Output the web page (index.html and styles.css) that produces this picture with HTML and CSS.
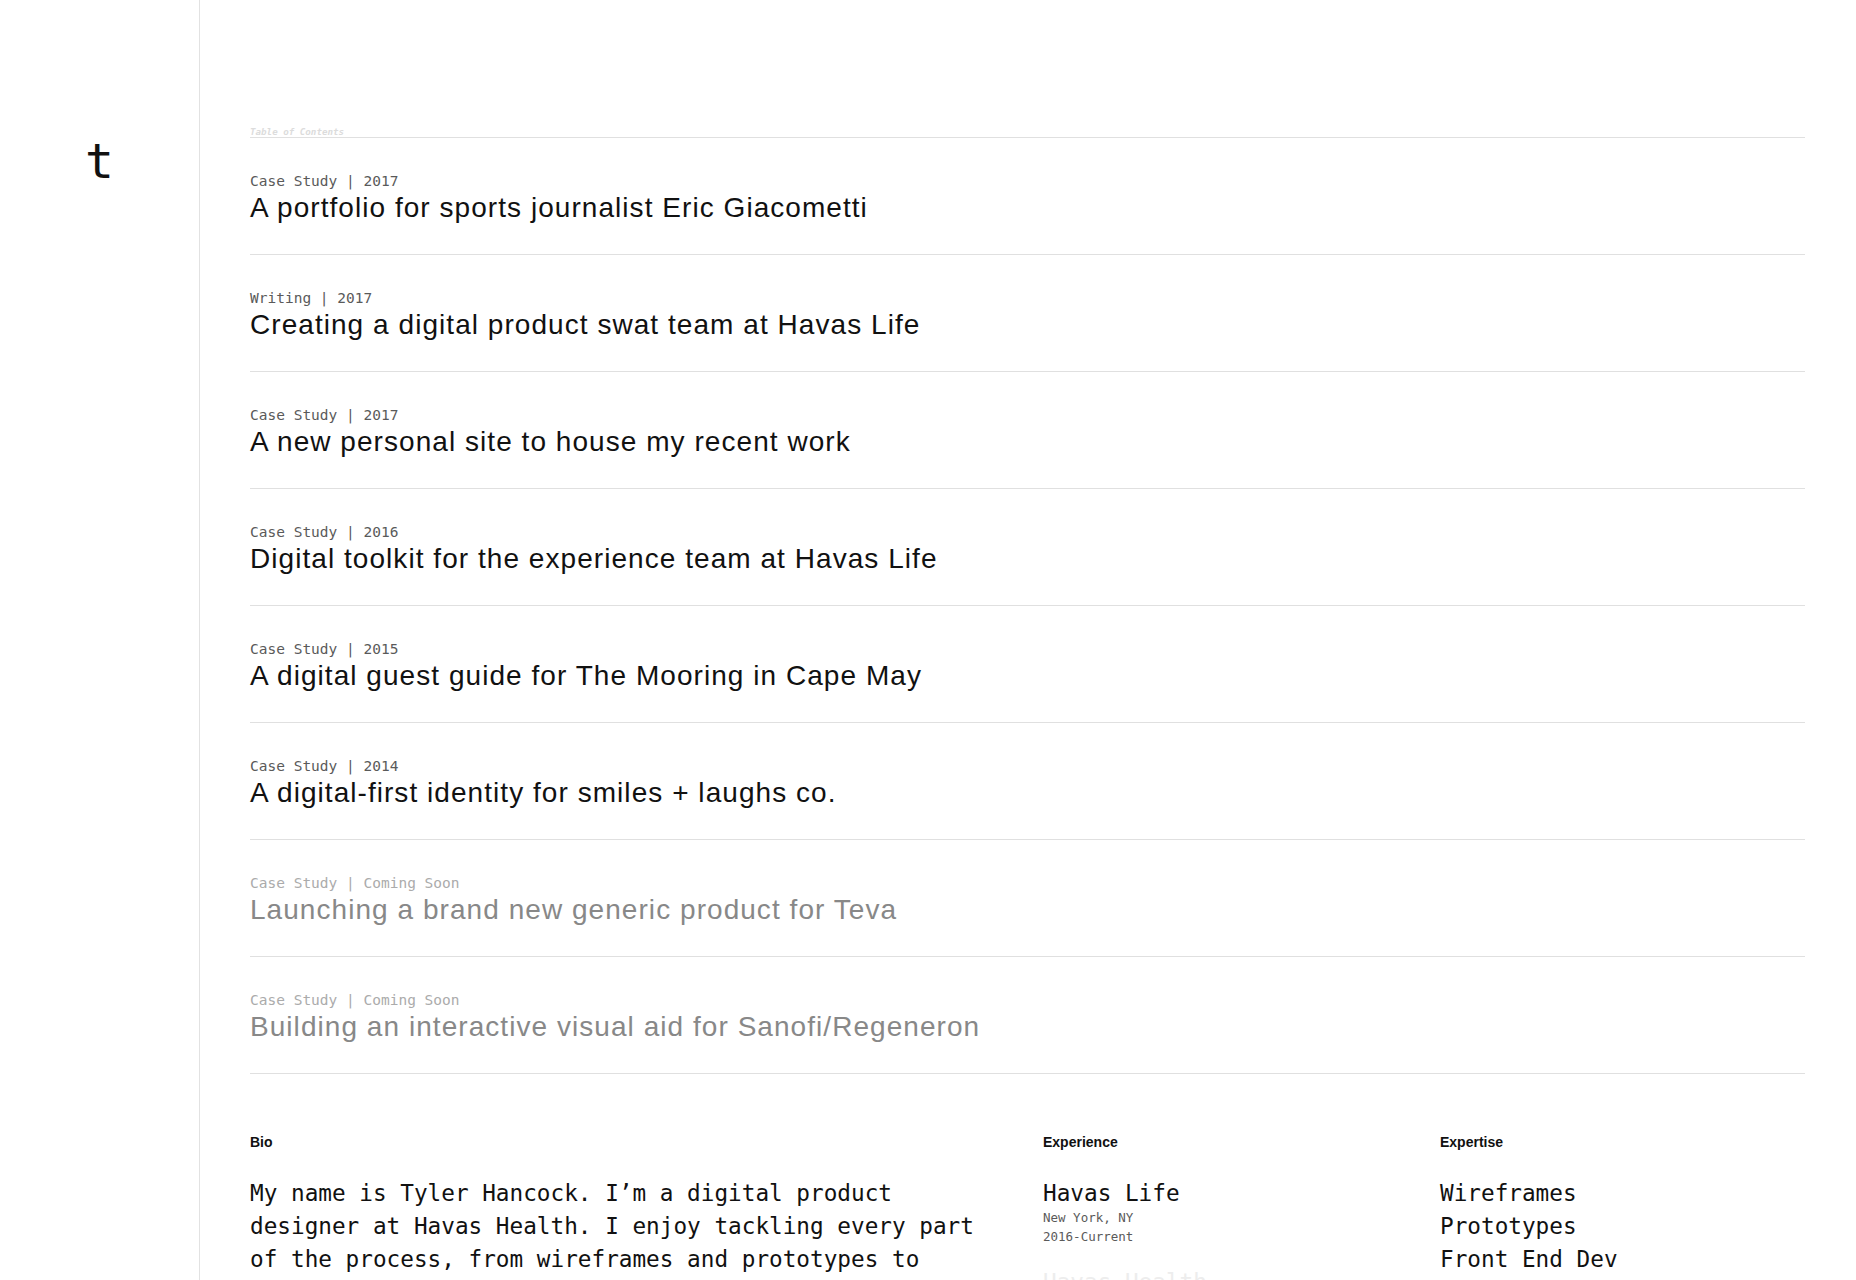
FILE: index.html
```html
<!DOCTYPE html>
<html lang="en">
<head>
    <meta charset="UTF-8">
    <meta name="viewport" content="width=device-width, initial-scale=1">
    <title>Tyler Hancock</title>
    <link rel="stylesheet" href="styles.css">
</head>
<body>

<aside class="sidebar">
    <a class="logo" href="#">t</a>
</aside>

<main>
    <h2 class="toc-label">Table of Contents</h2>
    <ul class="toc">
        <li class="entry">
            <span class="meta">Case Study | 2017</span>
            <a class="title" href="#">A portfolio for sports journalist Eric Giacometti</a>
        </li>
        <li class="entry">
            <span class="meta">Writing | 2017</span>
            <a class="title" href="#">Creating a digital product swat team at Havas Life</a>
        </li>
        <li class="entry">
            <span class="meta">Case Study | 2017</span>
            <a class="title" href="#">A new personal site to house my recent work</a>
        </li>
        <li class="entry">
            <span class="meta">Case Study | 2016</span>
            <a class="title" href="#">Digital toolkit for the experience team at Havas Life</a>
        </li>
        <li class="entry">
            <span class="meta">Case Study | 2015</span>
            <a class="title" href="#">A digital guest guide for The Mooring in Cape May</a>
        </li>
        <li class="entry">
            <span class="meta">Case Study | 2014</span>
            <a class="title" href="#">A digital-first identity for smiles + laughs co.</a>
        </li>
        <li class="entry soon">
            <span class="meta">Case Study | Coming Soon</span>
            <span class="title">Launching a brand new generic product for Teva</span>
        </li>
        <li class="entry soon">
            <span class="meta">Case Study | Coming Soon</span>
            <span class="title">Building an interactive visual aid for Sanofi/Regeneron</span>
        </li>
    </ul>

    <section class="about">
        <div class="bio">
            <h3>Bio</h3>
            <p>My name is Tyler Hancock. I’m a digital product designer at Havas Health. I enjoy tackling every part of the process, from wireframes and prototypes to front end development and everything in between.</p>
        </div>
        <div class="experience">
            <h3>Experience</h3>
            <div class="job">
                <p class="company">Havas Life</p>
                <p class="detail">New York, NY</p>
                <p class="detail">2016-Current</p>
            </div>
            <div class="job faded">
                <p class="company">Havas Health</p>
                <p class="detail">New York, NY</p>
                <p class="detail">2014-2016</p>
            </div>
        </div>
        <div class="expertise">
            <h3>Expertise</h3>
            <ul>
                <li>Wireframes</li>
                <li>Prototypes</li>
                <li>Front End Dev</li>
                <li>Visual Design</li>
            </ul>
        </div>
    </section>
</main>

</body>
</html>
```

FILE: styles.css
```css
body {
    margin: 0;
    display: grid;
    grid-template-columns: 200px 1fr;
    min-height: 100vh;
    background-color: white;
    color: #111;
    font-family: "Liberation Sans", Arial, sans-serif;
}
a {
    color: inherit;
    text-decoration: none;
}
ul {
    list-style: none;
    margin: 0;
    padding: 0;
}
p, h2, h3 {
    margin: 0;
}

.sidebar {
    box-sizing: border-box;
    border-right: 1px solid #e2e2e2;
    display: flex;
    justify-content: center;
    align-items: flex-start;
    padding-top: 133px;
}
.logo {
    font-family: "DejaVu Sans Mono", monospace;
    font-size: 48px;
    line-height: 56px;
    color: #111;
}

main {
    padding: 126px 51px 0 50px;
}
.toc-label {
    font-family: "DejaVu Sans Mono", monospace;
    font-style: italic;
    font-weight: bold;
    font-size: 9.2px;
    line-height: 11px;
    color: #dcdcdc;
    border-bottom: 1px solid #e0e0e0;
}

.entry {
    display: flex;
    flex-direction: column;
    padding: 33px 0 31px;
    border-bottom: 1px solid #e0e0e0;
}
.meta {
    font-family: "DejaVu Sans Mono", monospace;
    font-size: 14.5px;
    line-height: 20px;
    color: #5a5a5a;
}
.title {
    font-size: 28px;
    line-height: 32px;
    letter-spacing: 1.05px;
    padding-top: 1px;
    margin-bottom: -1px;
    color: #111;
}
.entry.soon .meta {
    color: #ababab;
}
.entry.soon .title {
    color: #888;
}

.about {
    display: grid;
    grid-template-columns: 793px 397px 1fr;
    margin-top: 60px;
}
.about h3 {
    font-size: 14px;
    line-height: 16px;
    font-weight: bold;
    margin-bottom: 27px;
}
.bio p,
.company,
.expertise li {
    font-family: "DejaVu Sans Mono", monospace;
    font-size: 22.7px;
    line-height: 33px;
}
.bio p {
    width: 54ch;
}
.company {
    margin-bottom: -2px;
}
.job {
    margin-bottom: 20px;
}
.detail {
    font-family: "DejaVu Sans Mono", monospace;
    font-size: 12.5px;
    line-height: 19px;
    color: #5a5a5a;
}
.job.faded {
    color: #ededed;
}
.job.faded .detail {
    color: #ededed;
}
```
